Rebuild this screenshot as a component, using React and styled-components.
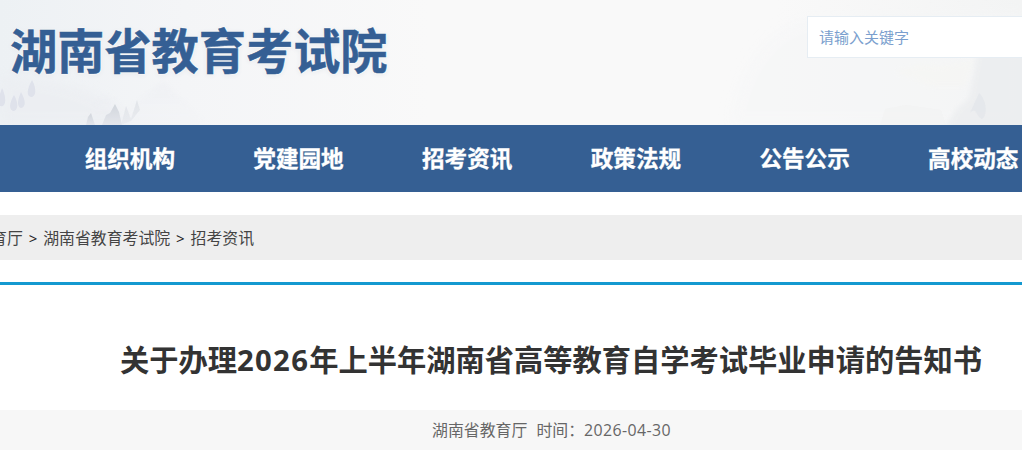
import React from "react";
import styled, { createGlobalStyle } from "styled-components";

const navItems = ["组织机构", "党建园地", "招考资讯", "政策法规", "公告公示", "高校动态"];

const Landscape = () => (
  <Scenery viewBox="0 0 1022 125" preserveAspectRatio="none" aria-hidden="true">
    <defs>
      <linearGradient id="mist" x1="0" x2="1" y1="0" y2="0">
        <stop offset="0" stopColor="#edf1f4" />
        <stop offset="0.18" stopColor="#f4f5f7" />
        <stop offset="0.42" stopColor="#f9f9f9" />
        <stop offset="0.76" stopColor="#f9f9f9" />
        <stop offset="1" stopColor="#f3f4f4" />
      </linearGradient>
      <linearGradient id="hill" x1="0" x2="0" y1="0" y2="1">
        <stop offset="0" stopColor="#e5e7ee" stopOpacity="0.75" />
        <stop offset="1" stopColor="#eeeff3" stopOpacity="0.2" />
      </linearGradient>
      <linearGradient id="tree" x1="0" x2="0" y1="0" y2="1">
        <stop offset="0" stopColor="#cdd2d9" />
        <stop offset="1" stopColor="#e3e5eb" />
      </linearGradient>
      <filter id="soft" x="-20%" y="-20%" width="140%" height="140%">
        <feGaussianBlur stdDeviation="0.7" />
      </filter>
      <filter id="cloud" x="-20%" y="-20%" width="140%" height="140%">
        <feGaussianBlur stdDeviation="2.5" />
      </filter>
      <filter id="haze" x="-20%" y="-20%" width="140%" height="140%">
        <feGaussianBlur stdDeviation="6" />
      </filter>
    </defs>
    <rect width="1022" height="125" fill="url(#mist)" />
    <path d="M0 75 C35 78 75 82 105 100 L130 125 H0 Z" fill="#ebedf1" opacity="0.6" filter="url(#haze)" />
    <path d="M76 125 L100 96 C110 93 120 102 126 109 L163 81 L211 125 Z" fill="url(#hill)" opacity="0.35" filter="url(#cloud)" />
    <g fill="#dfe2eb" filter="url(#soft)">
      <path d="M2 88 C5 94 7 103 3 106 C-1 107 -2 104 -2 100 Z" />
      <path d="M14 95 C19 103 18 111 13 111 C9 110 9 103 14 95 Z" />
      <path d="M21 92 C26 101 26 107 21 108 C17 107 17 101 21 92 Z" />
      <path d="M32 80 C37 89 36 97 31 97 C26 96 27 89 32 80 Z" />
    </g>
    <g fill="url(#tree)" filter="url(#soft)" opacity="0.85">
      <path d="M86 125 L88 117 L91 113 L95 125 Z" />
      <path d="M102 125 L106 115 L110 113 L115 104 L119 112 L122 125 Z" />
      <path d="M121 125 L126 106 L131 119 L137 100 L140 110 L131 121 Z" opacity="0.5" />
    </g>
    <path d="M730 125 C735 70 765 29 801 20 L1022 12 V125 Z" fill="#f5f6f7" opacity="0.5" filter="url(#haze)" />
    <path d="M895 72 L919 65 L940 67 L974 59 L965 86 L934 86 Z" fill="#f6f6f3" opacity="0.6" filter="url(#cloud)" />
    <path d="M978 50 L1040 50 V135 H940 L956 110 L969 98 Z" fill="#eaecee" opacity="0.7" filter="url(#cloud)" />
    <g filter="url(#soft)">
      <path d="M979 93 C988 101 987 117 982 119 C975 116 977 106 970 113 Z" fill="#e3e6ea" opacity="0.7" />
      <path d="M880 125 L885 109 L906 105 L941 110 L946 125 Z" fill="#f1f2f2" opacity="0.5" />
    </g>
  </Scenery>
);

const App = () => {
  return (
    <>
      <GlobalStyle />
      <Header>
        <Landscape />
        <Logo>湖南省教育考试院</Logo>
        <SearchInput type="text" placeholder="请输入关键字" />
      </Header>
      <Nav>
        {navItems.map((item) => (
          <NavLink key={item}>{item}</NavLink>
        ))}
      </Nav>
      <Breadcrumb>
        <span>湖南省教育厅</span>
        <Separator>&gt;</Separator>
        <span>湖南省教育考试院</span>
        <Separator>&gt;</Separator>
        <span>招考资讯</span>
      </Breadcrumb>
      <Article>
        <Title>
          关于办理<Year>2026</Year>年上半年湖南省高等教育自学考试毕业申请的告知书
        </Title>
        <Meta>
          <span>湖南省教育厅</span>
          <span>
            时间：<PublishDate>2026-04-30</PublishDate>
          </span>
        </Meta>
      </Article>
    </>
  );
};

export default App;

const GlobalStyle = createGlobalStyle`
  * {
    box-sizing: border-box;
  }

  body {
    margin: 0;
    overflow: hidden;
    background: #fff;
    font-family: "Noto Sans CJK SC", sans-serif;
  }
`;

const Header = styled.header`
  position: relative;
  display: flex;
  justify-content: space-between;
  align-items: flex-start;
  height: 125px;
  padding: 16px 0 0 10px;
  overflow: hidden;
`;

const Scenery = styled.svg`
  position: absolute;
  inset: 0;
  width: 100%;
  height: 100%;
  z-index: -1;
`;

const Logo = styled.h1`
  margin: 0;
  font-size: 47.2px;
  line-height: 66px;
  font-weight: 700;
  color: #355f94;
  white-space: nowrap;
  -webkit-text-stroke: 0.5px #355f94;
  text-shadow: 0 0 2px #fff, 0 0 3px #fff, 0 1px 5px #e2e5e9;
`;

const SearchInput = styled.input`
  width: 215px;
  height: 42px;
  padding: 0 11px 2px;
  border: 1px solid #e6edf3;
  border-right: none;
  border-radius: 0;
  outline: none;
  background: #fff;
  font-family: inherit;
  font-size: 15px;
  &::placeholder {
    color: #7b9fce;
    opacity: 1;
  }
`;

const Nav = styled.nav`
  display: flex;
  height: 67px;
  padding-left: 45.5px;
  overflow: hidden;
  background: #355f93;
`;

const NavLink = styled.a`
  flex: 0 0 168.7px;
  font-size: 22.6px;
  line-height: 66px;
  font-weight: 700;
  text-align: center;
  color: #fff;
  white-space: nowrap;
  -webkit-text-stroke: 0.3px #fff;
`;

const Breadcrumb = styled.div`
  display: flex;
  align-items: center;
  height: 45px;
  margin: 23px 0 22px -72.5px;
  overflow: hidden;
  background: #eee;
  font-size: 15.9px;
  line-height: 45px;
  color: #444;
  white-space: nowrap;
`;

const Separator = styled.span`
  width: 20.3px;
  padding-top: 1px;
  text-align: center;
  font-family: "Noto Sans", sans-serif;
  font-size: 15px;
  color: #222;
`;

const Article = styled.article`
  border-top: 3px solid #1499d0;
`;

const Title = styled.h2`
  margin: 0;
  padding: 43px 0 22px 80px;
  font-size: 29.26px;
  line-height: 60px;
  font-weight: 700;
  text-align: center;
  color: #333;
  white-space: nowrap;
`;

const Year = styled.span`
  font-family: "Open Sans", sans-serif;
  line-height: 1;
  letter-spacing: 1.3px;
`;

const Meta = styled.div`
  display: flex;
  justify-content: center;
  gap: 9px;
  height: 40px;
  padding-left: 81px;
  background: #f7f7f7;
  font-size: 15.9px;
  line-height: 40px;
  color: #666;
`;

const PublishDate = styled.time`
  font-family: "Open Sans", sans-serif;
  line-height: 1;
  letter-spacing: 0.4px;
`;
